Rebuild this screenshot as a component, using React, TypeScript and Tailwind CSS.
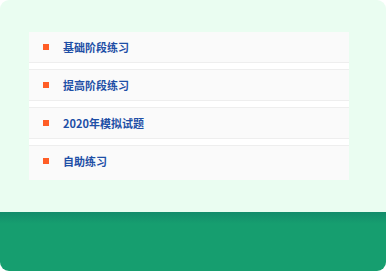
const items = ["基础阶段练习", "提高阶段练习", "2020年模拟试题", "自助练习"];

export default function App() {
  return (
    <div className="w-[386px] h-[271px] bg-white">
      <div
        className="flex h-full flex-col overflow-hidden rounded-[9px] bg-[#eafdf1]"
        style={{ fontFamily: '"Noto Sans CJK SC", "Noto Sans", sans-serif' }}
      >
        <div className="h-[212px] pl-[29px] pt-[32px]">
          <div className="flex w-[320px] flex-col bg-[#fafafa]">
            {items.map((t, i) => (
              <div key={t}>
                {i > 0 && <div className="h-[8px] border-y border-[#eeeeee] bg-white" />}
                <div
                  className={`flex items-center pl-[14px] ${i === items.length - 1 ? "h-[34px] pb-[4px]" : "h-[30px]"}`}
                >
                  <span className="h-[6px] w-[6px] bg-[#ff5d26]" />
                  <span className="ml-[14px] text-[11px] font-bold leading-none text-[#1e4fa6]">{t}</span>
                </div>
              </div>
            ))}
          </div>
        </div>
        <div className="flex-1 bg-gradient-to-b from-[#138c6b] to-[#169e6f] to-[20%]" />
      </div>
    </div>
  );
}
